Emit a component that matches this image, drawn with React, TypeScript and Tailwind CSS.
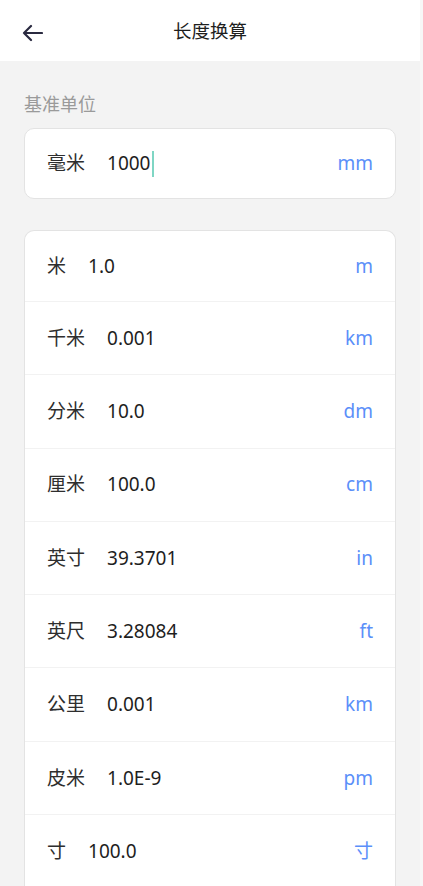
import { useState } from "react";

const rows = [
  { name: "米", value: "1.0", unit: "m" },
  { name: "千米", value: "0.001", unit: "km" },
  { name: "分米", value: "10.0", unit: "dm" },
  { name: "厘米", value: "100.0", unit: "cm" },
  { name: "英寸", value: "39.3701", unit: "in" },
  { name: "英尺", value: "3.28084", unit: "ft" },
  { name: "公里", value: "0.001", unit: "km" },
  { name: "皮米", value: "1.0E-9", unit: "pm" },
  { name: "寸", value: "100.0", unit: "寸" },
];

const font = { fontFamily: '"Noto Sans", "Noto Sans CJK SC", sans-serif' };

export default function App() {
  const [base] = useState("1000");

  return (
    <div className="flex h-[886px] w-[423px] overflow-hidden bg-[#f7f7f7]" style={font}>
      <div className="flex w-[420px] flex-col bg-[#f3f3f3]">
        <div className="relative flex h-[61px] shrink-0 items-center justify-center bg-white">
          <button className="absolute left-[22px] top-[24px] text-[#2a2a40]">
            <svg width="21" height="18" viewBox="0 0 21 18" fill="none">
              <path
                d="M20 9H2M9 2 2 9l7 7"
                stroke="currentColor"
                strokeWidth="2.2"
                strokeLinecap="round"
                strokeLinejoin="round"
              />
            </svg>
          </button>
          <h1 className="text-[18.5px] text-[#1e1e1e]">长度换算</h1>
        </div>

        <div className="px-[24px]">
          <p className="mt-[31px] text-[18px] leading-[24px] text-[#9a9a9a]">基准单位</p>

          <div className="mt-[12px] flex h-[71px] items-center rounded-[10px] border border-[#e3e3e3] bg-white px-[22px]">
            <span className="text-[19px] text-[#2e2e2e]">毫米</span>
            <span className="ml-[22px] flex items-center text-[19px] text-[#1e1e1e]">
              {base}
              <span className="ml-[1px] inline-block h-[26px] w-[2px] bg-[#7fd6c4]" />
            </span>
            <span className="ml-auto text-[19px] text-[#5b8ff9]">mm</span>
          </div>

          <div className="mt-[31px] overflow-hidden rounded-t-[10px] border border-b-0 border-[#e3e3e3] bg-white">
            {rows.map((r, i) => (
              <div
                key={i}
                className={
                  "flex items-center px-[22px]" +
                  (i > 0 ? " h-[73.3px] border-t border-[#f2f2f2]" : " h-[70px]")
                }
              >
                <span className="text-[19px] text-[#2e2e2e]">{r.name}</span>
                <span className="ml-[22px] text-[19px] text-[#1e1e1e]">{r.value}</span>
                <span className="ml-auto text-[19px] text-[#5b8ff9]">{r.unit}</span>
              </div>
            ))}
          </div>
        </div>
      </div>
    </div>
  );
}
